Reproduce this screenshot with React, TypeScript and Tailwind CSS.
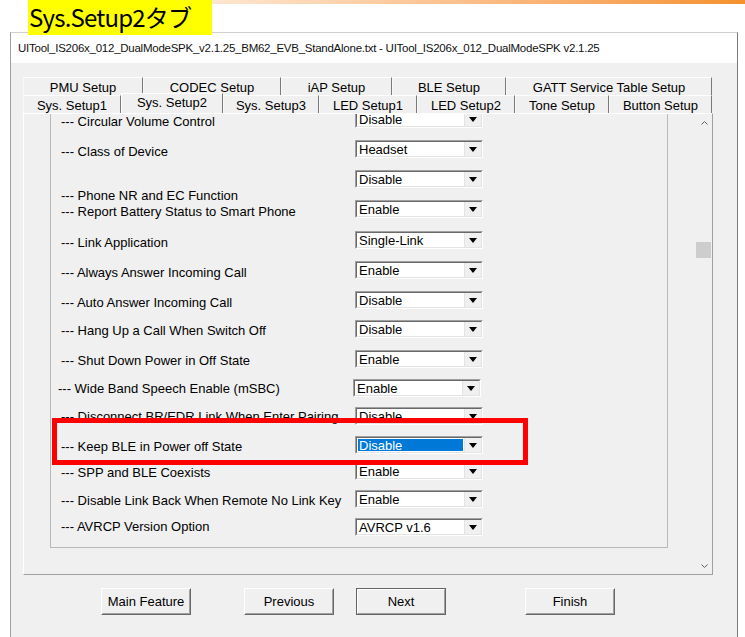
import React from "react";

type Tab = { label: string; w: string; selected?: boolean };

const backTabs: Tab[] = [
  { label: "PMU Setup", w: "w-[120px]" },
  { label: "CODEC Setup", w: "w-[138px]" },
  { label: "iAP Setup", w: "w-[111px]" },
  { label: "BLE Setup", w: "w-[114px]" },
  { label: "GATT Service Table Setup", w: "w-[206px]" },
];

const frontTabs: Tab[] = [
  { label: "Sys. Setup1", w: "w-[98px]" },
  { label: "Sys. Setup2", w: "w-[102px]", selected: true },
  { label: "Sys. Setup3", w: "w-[96px]" },
  { label: "LED Setup1", w: "w-[98px]" },
  { label: "LED Setup2", w: "w-[98px]" },
  { label: "Tone Setup", w: "w-[94px]" },
  { label: "Button Setup", w: "w-[103px]" },
];

type Row = {
  label: string;
  value: string;
  h: string; // row height
  lt: string; // label offset
  wide?: boolean;
  sel?: boolean;
};

const rows: Row[] = [
  { label: "--- Circular Volume Control", value: "Disable", h: "h-[30px]", lt: "mt-[3px]" },
  { label: "--- Class of Device", value: "Headset", h: "h-[30px]", lt: "mt-[3px]" },
  { label: "--- Phone NR and EC Function", value: "Disable", h: "h-[30px]", lt: "mt-[17px]" },
  { label: "--- Report Battery Status to Smart Phone", value: "Enable", h: "h-[31px]", lt: "mt-[3px]" },
  { label: "--- Link Application", value: "Single-Link", h: "h-[30px]", lt: "mt-[3px]" },
  { label: "--- Always Answer Incoming Call", value: "Enable", h: "h-[30px]", lt: "mt-[3px]" },
  { label: "--- Auto Answer Incoming Call", value: "Disable", h: "h-[29px]", lt: "mt-[3px]" },
  { label: "--- Hang Up a Call When Switch Off", value: "Disable", h: "h-[30px]", lt: "mt-[2px]" },
  { label: "--- Shut Down Power in Off State", value: "Enable", h: "h-[29px]", lt: "mt-[2px]" },
  { label: "--- Wide Band Speech Enable (mSBC)", value: "Enable", h: "h-[28px]", lt: "mt-[1px]", wide: true },
  { label: "--- Disconnect BR/EDR Link When Enter Pairing", value: "Disable", h: "h-[29px]", lt: "mt-[1px]" },
  { label: "--- Keep BLE in Power off State", value: "Disable", h: "h-[26px]", lt: "mt-[2px]", sel: true },
  { label: "--- SPP and BLE Coexists", value: "Enable", h: "h-[28px]", lt: "mt-[2px]" },
  { label: "--- Disable Link Back When Remote No Link Key", value: "Enable", h: "h-[28px]", lt: "mt-[2px]" },
  { label: "--- AVRCP Version Option", value: "AVRCP v1.6", h: "h-[29px]", lt: "mt-[0px]" },
];

const Combo = ({ value, selected }: { value: string; selected?: boolean }) => (
  <div className="h-[18px] w-[128px] border border-t-[#a0a0a0] border-l-[#a0a0a0] border-r-white border-b-white">
    <div className="flex h-full w-full border border-t-[#696969] border-l-[#696969] border-r-[#e3e3e3] border-b-[#e3e3e3] bg-white">
      <div className="flex-1 p-px">
        <div
          className={
            selected
              ? "h-full bg-[#0078d7] pl-px text-[13px] leading-[14px] text-white"
              : "h-full pl-px text-[13px] leading-[14px] text-black"
          }
        >
          {value}
        </div>
      </div>
      <div className="flex w-[17px] items-center justify-center border-l border-l-[#e3e3e3] bg-[#f0f0f0]">
        <svg width="8" height="5" viewBox="0 0 8 5">
          <path d="M0 0H8L4 5Z" fill="#000" />
        </svg>
      </div>
    </div>
  </div>
);

const Button = ({ label, def, cls }: { label: string; def?: boolean; cls: string }) => (
  <div
    className={
      (def ? "border border-[#646464] " : "border border-t-white border-l-white border-r-[#696969] border-b-[#696969] ") +
      "h-[27px] w-[90px] bg-[#f0f0f0] " +
      cls
    }
  >
    <div
      className={
        (def ? "border border-t-white border-l-white border-r-[#a0a0a0] border-b-[#a0a0a0] " : "border border-t-[#f0f0f0] border-l-[#f0f0f0] border-r-[#a0a0a0] border-b-[#a0a0a0] ") +
        "flex h-full items-center justify-center text-[13px] text-black"
      }
    >
      {label}
    </div>
  </div>
);

export default function App() {
  return (
    <div className="relative h-[637px] w-[745px] overflow-hidden bg-white font-['Liberation_Sans',Arial,sans-serif]">
      {/* caption + orange rule */}
      <div className="flex h-[32px] items-start">
        <div className="relative z-10 ml-[28px] h-[35px] w-[184px] whitespace-nowrap bg-[#ffff00] pl-[1px] font-['Noto_Sans_CJK_JP',sans-serif] text-[24px] leading-[34px] tracking-[-0.8px] text-black">
          Sys.Setup2タブ
        </div>
        <div className="h-[4px] flex-1 bg-linear-to-r from-[#fde6cf] to-[#f4912a]" />
      </div>

      {/* dialog window */}
      <div className="ml-[10px] flex h-[605px] w-[728px] flex-col border-x border-t border-l-[#a0a0a0] border-r-[#7a7a7a] border-t-[#cfcfcf]">
        <div className="h-[30px] whitespace-nowrap bg-white pl-[7px] text-[11.5px] leading-[30px] tracking-[-0.25px] text-[#111]">
          UITool_IS206x_012_DualModeSPK_v2.1.25_BM62_EVB_StandAlone.txt - UITool_IS206x_012_DualModeSPK v2.1.25
        </div>

        <div className="flex-1 bg-[#f0f0f0] pl-[12px] pt-[14px]">
          {/* tab headers */}
          <div className="flex h-[18px]">
            {backTabs.map((t) => (
              <div
                key={t.label}
                className={`${t.w} h-[18px] border-r border-t border-l border-t-white border-l-[#f8f8f8] border-r-[#7a7a7a] pt-[2px] text-center text-[13px] leading-[16px] text-black`}
              >
                {t.label}
              </div>
            ))}
          </div>
          <div className="flex h-[18px]">
            {frontTabs.map((t) =>
              t.selected ? (
                <div
                  key={t.label}
                  className={`${t.w} relative z-10 -mt-[2px] h-[20px] border-r border-t border-l border-t-white border-l-white border-r-[#7a7a7a] bg-[#f0f0f0] pt-[1px] text-center text-[13px] leading-[16px] text-black`}
                >
                  {t.label}
                </div>
              ) : (
                <div
                  key={t.label}
                  className={`${t.w} h-[18px] border-r border-t border-l border-t-white border-l-[#f8f8f8] border-r-[#7a7a7a] bg-[#f0f0f0] pt-[2px] text-center text-[13px] leading-[16px] text-black`}
                >
                  {t.label}
                </div>
              )
            )}
          </div>

          {/* tab page */}
          <div className="flex h-[462px] w-[690px] border border-t-white border-l-white border-r-[#a0a0a0] border-b-[#a0a0a0]">
            <div className="relative w-[673px] overflow-hidden">
              <div className="-mt-[4px] ml-[26px] w-[618px] border-x border-b border-[#b9b9b9]">
                {rows.map((r) => (
                  <div key={r.label} className={`flex ${r.h}`}>
                    <div
                      className={`${r.wide ? "w-[302px] pl-[7px]" : "w-[304px] pl-[10px]"} ${r.lt} h-[18px] whitespace-nowrap text-[13px] leading-[18px] text-black`}
                    >
                      {r.label}
                    </div>
                    <Combo value={r.value} selected={r.sel} />
                  </div>
                ))}
              </div>
            </div>

            {/* scrollbar */}
            <div className="flex w-[16px] flex-col">
              <div className="flex h-[17px] items-center justify-center">
                <svg width="7" height="4" viewBox="0 0 7 4">
                  <path d="M0.5 3.5L3.5 0.5L6.5 3.5" stroke="#606060" fill="none" />
                </svg>
              </div>
              <div className="flex-1">
                <div className="mt-[111px] h-[16px] w-[15px] bg-[#cdcdcd]" />
              </div>
              <div className="flex h-[17px] items-center justify-center">
                <svg width="7" height="4" viewBox="0 0 7 4">
                  <path d="M0.5 0.5L3.5 3.5L6.5 0.5" stroke="#606060" fill="none" />
                </svg>
              </div>
            </div>
          </div>

          {/* wizard buttons */}
          <div className="mt-[13px] flex">
            <Button label="Main Feature" cls="ml-[78px]" />
            <Button label="Previous" cls="ml-[53px]" />
            <Button label="Next" def cls="ml-[22px]" />
            <Button label="Finish" cls="ml-[79px]" />
          </div>
        </div>
      </div>

      {/* red highlight annotation */}
      <div className="absolute left-[52px] top-[418px] h-[47px] w-[476px] border-[5px] border-[#ff0000]" />
    </div>
  );
}
